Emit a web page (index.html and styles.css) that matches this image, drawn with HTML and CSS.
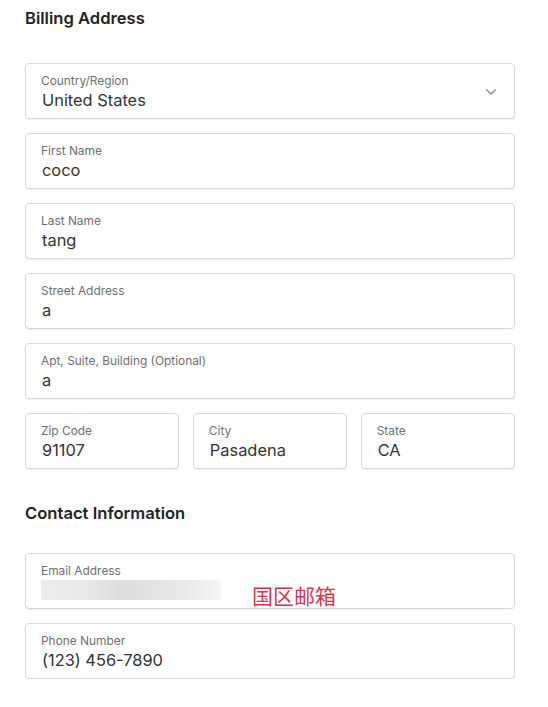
FILE: index.html
```html
<!DOCTYPE html>
<html>
<head>
<meta charset="utf-8">
<link rel="stylesheet" href="styles.css">
</head>
<body>
<div class="page">
  <h2 class="heading">Billing Address</h2>
  <div class="fields">
    <div class="field select">
      <div class="label">Country/Region</div>
      <div class="value">United States</div>
      <svg class="chevron" width="12" height="8" viewBox="0 0 12 8"><path d="M1.5 1.8 L6 6 L10.5 1.8" fill="none" stroke="#8a8a8a" stroke-width="1.4" stroke-linecap="round" stroke-linejoin="round"/></svg>
    </div>
    <div class="field">
      <div class="label">First Name</div>
      <div class="value">coco</div>
    </div>
    <div class="field">
      <div class="label">Last Name</div>
      <div class="value">tang</div>
    </div>
    <div class="field">
      <div class="label">Street Address</div>
      <div class="value">a</div>
    </div>
    <div class="field">
      <div class="label">Apt, Suite, Building (Optional)</div>
      <div class="value">a</div>
    </div>
    <div class="row">
      <div class="field">
        <div class="label">Zip Code</div>
        <div class="value">91107</div>
      </div>
      <div class="field">
        <div class="label">City</div>
        <div class="value">Pasadena</div>
      </div>
      <div class="field">
        <div class="label">State</div>
        <div class="value">CA</div>
      </div>
    </div>
  </div>
  <h2 class="heading contact">Contact Information</h2>
  <div class="fields">
    <div class="field email">
      <div class="label">Email Address</div>
      <div class="value"><span class="blur"></span></div>
      <span class="note">国区邮箱</span>
    </div>
    <div class="field">
      <div class="label">Phone Number</div>
      <div class="value">(123) 456-7890</div>
    </div>
  </div>
</div>
</body>
</html>
```

FILE: styles.css
```css
html, body {
  margin: 0;
  padding: 0;
  background: #ffffff;
}
body {
  font-family: Inter, "Noto Sans", "Noto Sans CJK SC", sans-serif;
  color: #1d1d1f;
}
.page {
  padding: 8px 0 0 25px;
  width: 490px;
}
.heading {
  margin: 0 0 35px 0;
  font-size: 16.6px;
  line-height: 20px;
  font-weight: 600;
  color: #222222;
}
.heading.contact {
  margin: 34px 0 30px 0;
}
.fields {
  display: flex;
  flex-direction: column;
  gap: 14px;
}
.row {
  display: grid;
  grid-template-columns: 1fr 1fr 1fr;
  column-gap: 13.5px;
}
.field {
  position: relative;
  box-sizing: border-box;
  height: 56px;
  border: 1px solid #d9d9d9;
  border-radius: 4px;
  padding: 9px 15px 0 15px;
  box-shadow: 0 1px 2px rgba(0, 0, 0, 0.06);
  background: #fff;
}
.label {
  font-size: 11.9px;
  line-height: 16px;
  color: #6e6e73;
}
.value {
  margin-top: 1px;
  padding-left: 1px;
  font-size: 16.4px;
  line-height: 20px;
  color: #333333;
}
.chevron {
  position: absolute;
  right: 17px;
  top: 24px;
}
.blur {
  display: block;
  width: 180px;
  height: 20px;
  margin-left: -1px;
  background: linear-gradient(90deg, #ececec 0%, #e6e6e6 30%, #dcdcdc 45%, #e2e2e2 60%, #e9e9e9 80%, #f5f5f5 100%);
  border-radius: 2px;
}
.note {
  position: absolute;
  left: 226px;
  top: 29px;
  font-family: "Noto Sans CJK SC", sans-serif;
  font-size: 21px;
  line-height: 24px;
  color: #d2374e;
}
```
